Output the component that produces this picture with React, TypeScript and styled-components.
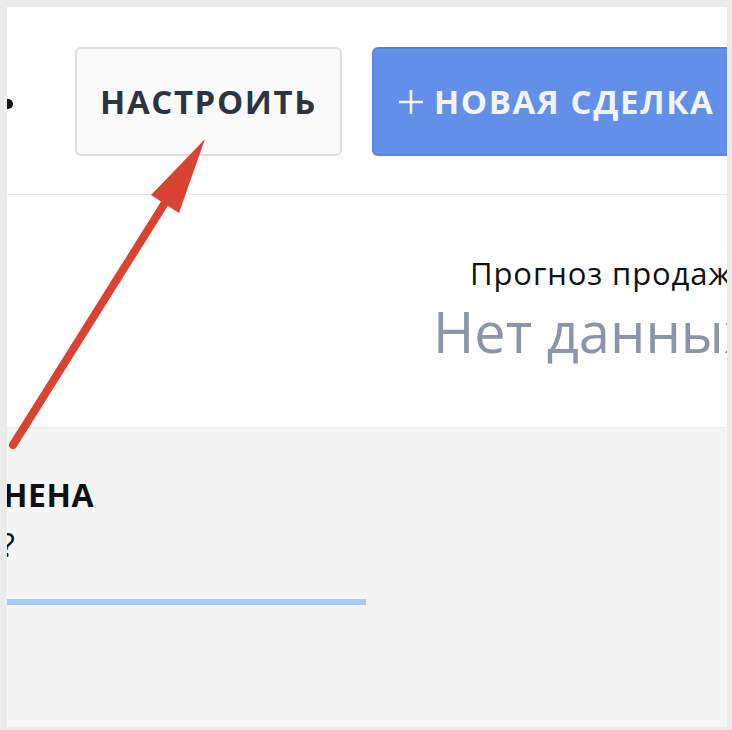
import React from "react";
import styled, { createGlobalStyle } from "styled-components";

const GlobalStyle = createGlobalStyle`
  html, body {
    margin: 0;
    padding: 0;
    background: #ebebeb;
  }
  body {
    font-family: "Open Sans", "Noto Sans", sans-serif;
  }
`;

const Page = styled.div`
  position: relative;
  width: 732px;
  height: 730px;
  box-sizing: border-box;
  padding: 7px 5px 3px 7px;
  background: #ebebeb;
`;

const Frame = styled.div`
  width: 720px;
  height: 720px;
  display: flex;
  flex-direction: column;
  overflow: hidden;
  background: #f5f5f5;
`;

const Header = styled.header`
  height: 188px;
  flex-shrink: 0;
  display: flex;
  align-items: center;
  padding-top: 2px;
  box-sizing: border-box;
  background: #ffffff;
  border-bottom: 1px solid #e6e7ea;
  overflow: hidden;
`;

const Dot = styled.span`
  flex-shrink: 0;
  width: 10px;
  height: 10px;
  margin-left: -4px;
  margin-top: 4px;
  border-radius: 50%;
  background: #111111;
`;

const Button = styled.button<{ primary?: boolean }>`
  flex-shrink: 0;
  height: 109px;
  box-sizing: border-box;
  display: flex;
  align-items: center;
  justify-content: center;
  gap: 10px;
  font-family: "Open Sans", "Noto Sans", sans-serif;
  font-weight: 700;
  font-size: 33px;
  letter-spacing: 1.6px;
  border-radius: 6px;
  cursor: pointer;
  ${(p) =>
    p.primary
      ? `
    margin-left: 30px;
    padding: 0 40px 0 24px;
    background: #628fe8;
    color: #f3f4f6;
    border: 2px solid #5a86dc;
    border-top-color: #5581d6;
  `
      : `
    margin-left: 62px;
    width: 267px;
    background: #fafafa;
    color: #2e343e;
    border: 2px solid #dedede;
  `}
`;

const Stats = styled.section`
  height: 233px;
  flex-shrink: 0;
  box-sizing: border-box;
  padding: 56px 0 0 426px;
  background: #ffffff;
  border-bottom: 1px solid #e8eaed;
  white-space: nowrap;
  display: flex;
  flex-direction: column;
  align-items: flex-start;
`;

const StatLabel = styled.div`
  margin-left: 37px;
  font-size: 31px;
  letter-spacing: 0.9px;
  line-height: 44px;
  color: #111111;
`;

const StatValue = styled.div`
  margin-top: 4px;
  font-size: 56px;
  line-height: 64px;
  color: #8b95a7;
`;

const Board = styled.section`
  flex: 1;
  padding-top: 45px;
  background: #f5f5f5;
`;

const Column = styled.div`
  width: 359px;
`;

const ColumnTitle = styled.div`
  margin-left: -4px;
  font-size: 32px;
  font-weight: 700;
  letter-spacing: 0.5px;
  line-height: 44px;
  color: #111111;
  white-space: nowrap;
`;

const ColumnSub = styled.div`
  margin-left: -6px;
  margin-top: 6px;
  font-size: 32px;
  line-height: 44px;
  color: #111111;
`;

const ColumnBar = styled.div`
  margin-top: 32px;
  height: 6px;
  background: #a9cbf7;
`;

const Arrow = styled.svg`
  position: absolute;
  inset: 0;
  pointer-events: none;
`;

const Plus = () => (
  <svg width="26" height="26" viewBox="0 0 26 26">
    <path d="M13 1v24M1 13h24" stroke="currentColor" strokeWidth="2.6" />
  </svg>
);

export default function App() {
  return (
    <>
      <GlobalStyle />
      <Page>
        <Frame>
          <Header>
            <Dot />
            <Button>НАСТРОИТЬ</Button>
            <Button primary>
              <Plus />
              НОВАЯ СДЕЛКА
            </Button>
          </Header>
          <Stats>
            <StatLabel>Прогноз продаж</StatLabel>
            <StatValue>Нет данных</StatValue>
          </Stats>
          <Board>
            <Column>
              <ColumnTitle>НЕНА</ColumnTitle>
              <ColumnSub>?</ColumnSub>
              <ColumnBar />
            </Column>
          </Board>
        </Frame>
        <Arrow width="732" height="730" viewBox="0 0 732 730">
          <line
            x1="13"
            y1="445"
            x2="168"
            y2="198"
            stroke="#d94332"
            strokeWidth="8"
            strokeLinecap="round"
          />
          <polygon points="205,139 151,195 179,213" fill="#d94332" />
        </Arrow>
      </Page>
    </>
  );
}
